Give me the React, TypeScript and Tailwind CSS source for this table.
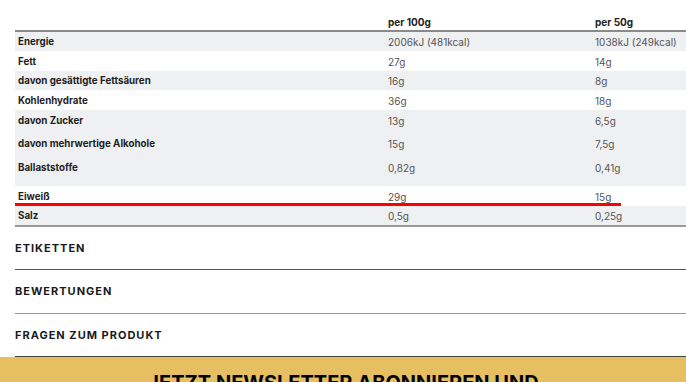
import React from "react";

type Row = { l: string; a: string; b: string; grey: boolean; h: string };

const rows: Row[] = [
  { l: "Energie", a: "2006kJ (481kcal)", b: "1038kJ (249kcal)", grey: true, h: "h-[19px]" },
  { l: "Fett", a: "27g", b: "14g", grey: false, h: "h-[20px]" },
  { l: "davon gesättigte Fettsäuren", a: "16g", b: "8g", grey: true, h: "h-[19px]" },
  { l: "Kohlenhydrate", a: "36g", b: "18g", grey: false, h: "h-[20px]" },
  { l: "davon Zucker", a: "13g", b: "6,5g", grey: true, h: "h-[21px]" },
  { l: "davon mehrwertige Alkohole", a: "15g", b: "7,5g", grey: true, h: "h-[24px]" },
  { l: "Ballaststoffe", a: "0,82g", b: "0,41g", grey: true, h: "h-[24px]" },
  { l: "", a: "", b: "", grey: true, h: "h-[7px]" },
  { l: "Eiweiß", a: "29g", b: "15g", grey: false, h: "h-[20px]" },
  { l: "Salz", a: "0,5g", b: "0,25g", grey: true, h: "h-[19px]" },
];

export default function App() {
  return (
    <div
      className="w-[686px] h-[382px] overflow-hidden bg-white"
      style={{ fontFamily: "Inter, 'Noto Sans', sans-serif" }}
    >
      <div className="pl-[15px] pt-[13px] relative">
        {/* header */}
        <div className="flex h-[19px] pt-[2px] items-center text-[10px] font-bold text-[#222] border-b-[2px] border-[#8a8a8a]">
          <div className="w-[373px]" />
          <div className="w-[207px]">per 100g</div>
          <div className="flex-1">per 50g</div>
        </div>
        {rows.map((r, i) => (
          <div
            key={i}
            className={`flex items-center pt-[2px] ${r.h} ${r.grey ? "bg-[#eef0f2]" : "bg-white"}`}
          >
            <div className="w-[373px] pl-[3px] text-[9.75px] font-bold text-[#1f1f1f]">{r.l}</div>
            <div className="w-[207px] text-[10px] text-[#555]">{r.a}</div>
            <div className="flex-1 text-[10px] text-[#555]">{r.b}</div>
          </div>
        ))}
        <div className="h-[2px] bg-[#9a9a9a]" />
        <div className="absolute left-[15px] top-[203px] w-[606px] h-[3px] bg-[#ff0000]" />

        {/* accordions */}
        <div className="flex items-center h-[43px] border-b border-[#555] text-[11px] font-bold tracking-[1px] text-[#1a1a1a]">
          ETIKETTEN
        </div>
        <div className="flex items-center h-[44px] border-b border-[#999] text-[11px] font-bold tracking-[1px] text-[#1a1a1a]">
          BEWERTUNGEN
        </div>
        <div className="flex items-center h-[43px] border-b border-[#444] text-[11px] font-bold tracking-[1px] text-[#1a1a1a]">
          FRAGEN ZUM PRODUKT
        </div>
      </div>
      <div className="bg-[#e6bf63] h-[40px] pt-[12px] text-center">
        <div className="text-[20px] leading-[28px] font-bold text-black">
          JETZT NEWSLETTER ABONNIEREN UND
        </div>
      </div>
    </div>
  );
}
